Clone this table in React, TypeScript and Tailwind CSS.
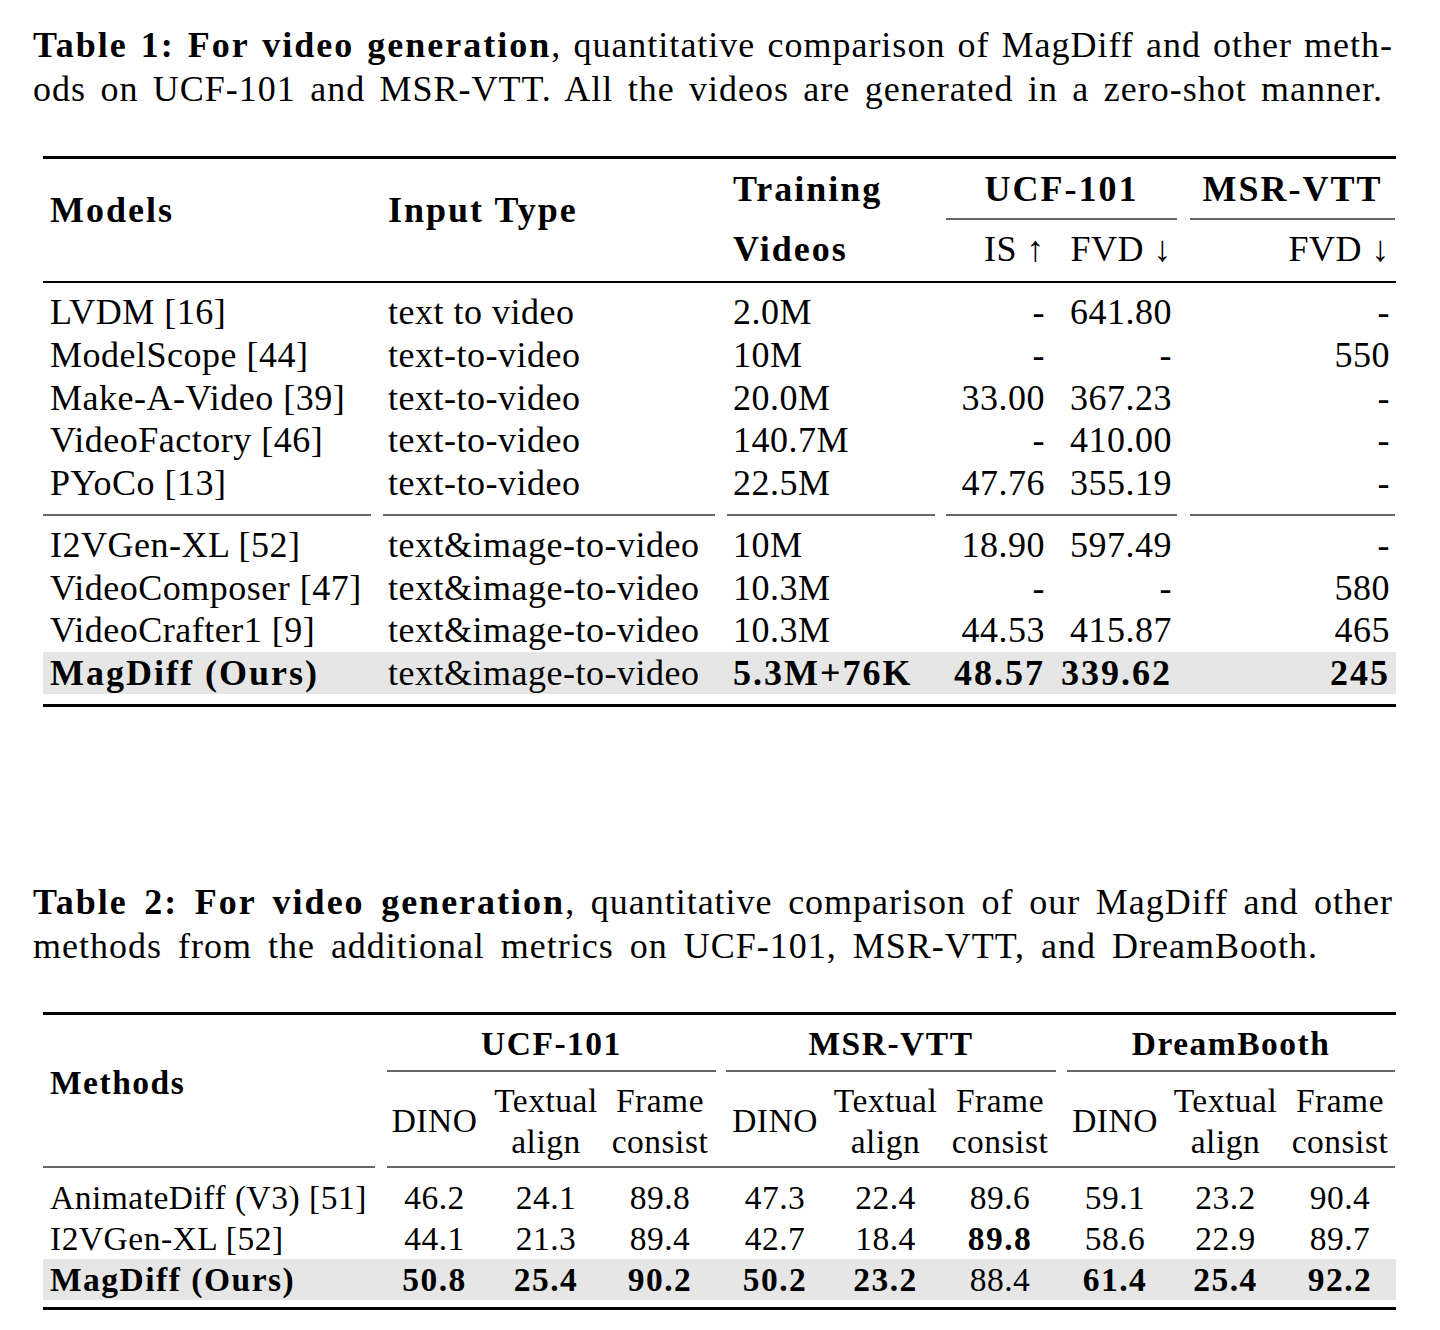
import React from 'react'

const reg = 'tracking-[0.5px]'
const bld = 'font-bold tracking-[2px]'
const bld2 = 'font-bold tracking-[1.5px]'

const group1: string[][] = [
  ['LVDM [16]', 'text to video', '2.0M', '-', '641.80', '-'],
  ['ModelScope [44]', 'text-to-video', '10M', '-', '-', '550'],
  ['Make-A-Video [39]', 'text-to-video', '20.0M', '33.00', '367.23', '-'],
  ['VideoFactory [46]', 'text-to-video', '140.7M', '-', '410.00', '-'],
  ['PYoCo [13]', 'text-to-video', '22.5M', '47.76', '355.19', '-'],
]

const group2: string[][] = [
  ['I2VGen-XL [52]', 'text&image-to-video', '10M', '18.90', '597.49', '-'],
  ['VideoComposer [47]', 'text&image-to-video', '10.3M', '-', '-', '580'],
  ['VideoCrafter1 [9]', 'text&image-to-video', '10.3M', '44.53', '415.87', '465'],
]

const t2rows = [
  {
    name: 'AnimateDiff (V3) [51]',
    vals: ['46.2', '24.1', '89.8', '47.3', '22.4', '89.6', '59.1', '23.2', '90.4'],
    bold: [false, false, false, false, false, false, false, false, false],
  },
  {
    name: 'I2VGen-XL [52]',
    vals: ['44.1', '21.3', '89.4', '42.7', '18.4', '89.8', '58.6', '22.9', '89.7'],
    bold: [false, false, false, false, false, true, false, false, false],
  },
]

function Row1({
  cells,
  bold = [],
  tall,
  shade,
}: {
  cells: string[]
  bold?: boolean[]
  tall?: boolean
  shade?: boolean
}) {
  const f = (i: number) => (bold[i] ? bld : reg)
  return (
    <div
      className={`grid grid-cols-[340px_344px_219px_109px_129px_212px] whitespace-nowrap ${
        tall ? 'h-[42.75px] leading-[42.75px]' : 'h-[42.5px] leading-[42.5px]'
      } ${shade ? 'bg-[#e6e6e6]' : ''}`}
    >
      <div className={`pl-[7px] ${f(0)}`}>{cells[0]}</div>
      <div className={`pl-[5px] ${f(1)}`}>{cells[1]}</div>
      <div className={`pl-[6px] ${f(2)}`}>{cells[2]}</div>
      <div className={`pr-[10px] text-right ${f(3)}`}>{cells[3]}</div>
      <div className={`pr-[12px] text-right ${f(4)}`}>{cells[4]}</div>
      <div className={`pr-[6px] text-right ${f(5)}`}>{cells[5]}</div>
    </div>
  )
}

function Row2({
  name,
  vals,
  bold,
  nameBold,
  shade,
}: {
  name: string
  vals: string[]
  bold: boolean[]
  nameBold?: boolean
  shade?: boolean
}) {
  return (
    <div
      className={`grid grid-cols-[339px_105px_118px_110px_120px_101px_128px_102px_119px_110px] h-[41px] leading-[41px] whitespace-nowrap ${
        shade ? 'bg-[#e6e6e6]' : ''
      }`}
    >
      <div className={`pl-[7px] ${nameBold ? bld2 : reg}`}>{name}</div>
      {vals.map((v, i) => (
        <div key={i} className={`flex justify-center ${bold[i] ? bld2 : reg}`}>
          {v}
        </div>
      ))}
    </div>
  )
}

function SubHead({ top, bottom }: { top?: string; bottom?: string }) {
  return (
    <div className="flex h-[82px] flex-col items-center justify-center whitespace-nowrap leading-[41px] tracking-[0.5px]">
      <div>{top}</div>
      {bottom && <div>{bottom}</div>}
    </div>
  )
}

export default function App() {
  return (
    <div className="h-[1330px] w-[1440px] overflow-hidden bg-white pt-[23px] font-['Liberation_Serif',serif] text-[36px] text-black">
      {/* Caption 1 */}
      <div className="ml-[33px] leading-[44px] tracking-[1px]">
        <div className="w-[1360px] text-justify [text-align-last:justify]">
          <b className="tracking-[2px]">Table 1: For video generation</b>, quantitative comparison of MagDiff and
          other meth-
        </div>
        <div className="w-[1350px] text-justify [text-align-last:justify]">
          ods on UCF-101 and MSR-VTT. All the videos are generated in a zero-shot manner.
        </div>
      </div>

      {/* Table 1 */}
      <div className="ml-[43px] mt-[45px] w-[1353px]">
        <div className="h-[3px] bg-black" />
        <div className="flex h-[122px] whitespace-nowrap">
          <div className={`w-[340px] pl-[7px] pt-[30px] leading-[43px] ${bld}`}>Models</div>
          <div className={`w-[344px] pl-[5px] pt-[30px] leading-[43px] ${bld}`}>Input Type</div>
          <div className={`w-[219px] pl-[6px] pt-[9px] leading-[43px] ${bld}`}>
            <div className="h-[43px]">Training</div>
            <div className="mt-[17px] h-[43px]">Videos</div>
          </div>
          <div className="w-[238px] pt-[9px]">
            <div className="w-[231px]">
              <div className={`h-[43px] text-center leading-[43px] ${bld}`}>UCF-101</div>
              <div className="mt-[7px] h-[2px] bg-[#666]" />
            </div>
            <div className={`mt-[8px] flex h-[43px] leading-[43px] ${reg}`}>
              <div className="w-[109px] pr-[10px] text-right">IS ↑</div>
              <div className="w-[129px] pr-[12px] text-right">FVD ↓</div>
            </div>
          </div>
          <div className="w-[212px] pt-[9px]">
            <div className="ml-[6px] w-[205px]">
              <div className={`h-[43px] text-center leading-[43px] ${bld}`}>MSR-VTT</div>
              <div className="mt-[7px] h-[2px] bg-[#666]" />
              <div className={`mt-[8px] h-[43px] pr-[5px] text-right leading-[43px] ${reg}`}>FVD ↓</div>
            </div>
          </div>
        </div>
        <div className="h-[2px] bg-black" />

        <div className="mt-[8px]">
          {group1.map((r, i) => (
            <Row1 key={i} cells={r} tall />
          ))}
        </div>

        <div className="mt-[9.5px] flex">
          <div className="h-[2px] w-[328px] bg-[#666]" />
          <div className="ml-[12px] h-[2px] w-[332px] bg-[#666]" />
          <div className="ml-[12px] h-[2px] w-[208px] bg-[#666]" />
          <div className="ml-[11px] h-[2px] w-[231px] bg-[#666]" />
          <div className="ml-[13px] h-[2px] w-[205px] bg-[#666]" />
        </div>

        <div className="mt-[8px]">
          {group2.map((r, i) => (
            <Row1 key={i} cells={r} />
          ))}
          <Row1
            cells={['MagDiff (Ours)', 'text&image-to-video', '5.3M+76K', '48.57', '339.62', '245']}
            bold={[true, false, true, true, true, true]}
            shade
          />
        </div>
        <div className="mt-[10px] h-[3px] bg-black" />
      </div>

      {/* Caption 2 */}
      <div className="ml-[33px] mt-[172.75px] leading-[44px] tracking-[1px]">
        <div className="w-[1360px] text-justify [text-align-last:justify]">
          <b className="tracking-[2px]">Table 2: For video generation</b>, quantitative comparison of our MagDiff
          and other
        </div>
        <div className="w-[1285px] text-justify [text-align-last:justify]">
          methods from the additional metrics on UCF-101, MSR-VTT, and DreamBooth.
        </div>
      </div>

      {/* Table 2 */}
      <div className="ml-[43px] mt-[44px] w-[1353px] text-[33.5px]">
        <div className="h-[3px] bg-black" />
        <div className="flex h-[151px] whitespace-nowrap">
          <div className={`w-[339px] pl-[7px] pt-[45.5px] leading-[43px] ${bld2}`}>Methods</div>
          <div className="w-[1014px] pt-[6.5px]">
            <div className="flex">
              {[
                { label: 'UCF-101', cls: 'ml-[5px] w-[329px]' },
                { label: 'MSR-VTT', cls: 'ml-[10px] w-[330px]' },
                { label: 'DreamBooth', cls: 'ml-[11px] w-[328px]' },
              ].map((g) => (
                <div key={g.label} className={g.cls}>
                  <div className={`h-[43px] text-center leading-[43px] ${bld2}`}>{g.label}</div>
                  <div className="mt-[5.5px] h-[2px] bg-[#666]" />
                </div>
              ))}
            </div>
            <div className="mt-[7.5px] grid grid-cols-[105px_118px_110px_120px_101px_128px_102px_119px_110px]">
              {[0, 1, 2].map((k) => (
                <React.Fragment key={k}>
                  <SubHead top="DINO" />
                  <SubHead top="Textual" bottom="align" />
                  <SubHead top="Frame" bottom="consist" />
                </React.Fragment>
              ))}
            </div>
          </div>
        </div>
        <div className="flex">
          <div className="h-[2px] w-[332px] bg-[#666]" />
          <div className="ml-[12px] h-[2px] w-[1008px] bg-[#666]" />
        </div>

        <div className="mt-[8.5px]">
          {t2rows.map((r) => (
            <Row2 key={r.name} name={r.name} vals={r.vals} bold={r.bold} />
          ))}
          <Row2
            name="MagDiff (Ours)"
            nameBold
            vals={['50.8', '25.4', '90.2', '50.2', '23.2', '88.4', '61.4', '25.4', '92.2']}
            bold={[true, true, true, true, true, false, true, true, true]}
            shade
          />
        </div>
        <div className="mt-[7.5px] h-[3px] bg-black" />
      </div>
    </div>
  )
}
